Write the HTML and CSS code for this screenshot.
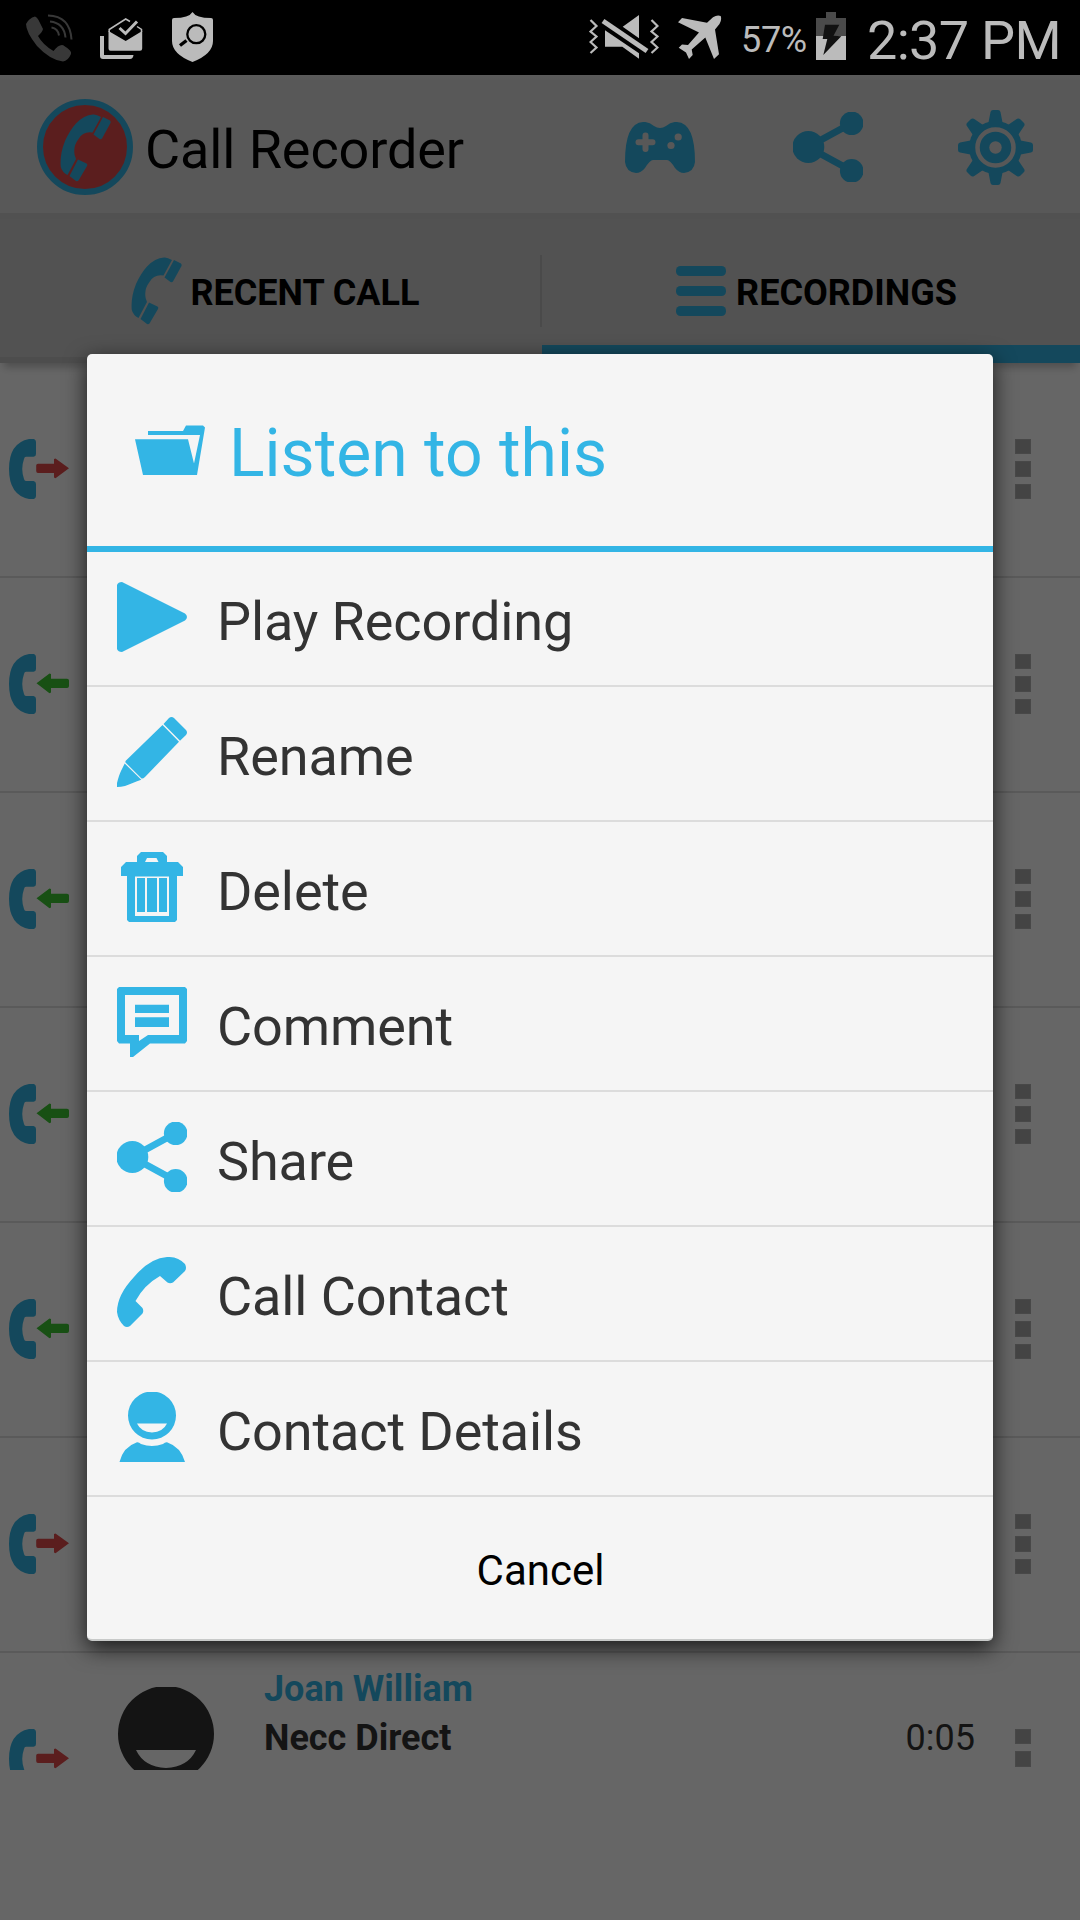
FILE: index.html
```html
<!DOCTYPE html>
<html lang="en">
<head>
    <meta charset="UTF-8">
    <meta name="viewport" content="width=device-width, initial-scale=1.0">
    <title>Call Recorder</title>
    <link rel="stylesheet" href="styles.css">
</head>
<body>
    <!-- Shared icons -->
    <svg class="defs" width="0" height="0">
        <symbol id="handset" viewBox="0 0 51 68">
            <path d="M33 .5Q36 0 41 3L32.500 18.500Q23 17 18.500 25Q14 31 14.300 37Q14 41 16 45L7.500 61Q2 58 .8 53Q-.5 41 5 27Q10 16 16 9.500Q24 1 33 .5Z"/>
            <path d="M43 3L50 6.500Q51 7.500 50.500 9L42 24.500Q41 25.500 39.500 25L33.500 20.500Z"/>
            <path d="M18 45.500L26.500 49.500Q28 50.500 27 52L18.500 66.500Q17.500 67.500 16 67L9.500 62Z"/>
        </symbol>
        <symbol id="share" viewBox="0 0 70 70">
            <path d="M15 35L59 11M15 35L59 59" stroke="currentColor" stroke-width="7"/>
            <circle cx="15.300" cy="35" r="16"/>
            <circle cx="58.700" cy="11.300" r="11.800"/>
            <circle cx="58.700" cy="58.900" r="11.800"/>
        </symbol>
        <symbol id="contact" viewBox="0 0 70 70">
            <path fill-rule="evenodd" d="M35-.5A24 24 0 0 1 35 47.500A24 24 0 0 1 35-.5ZM20 31.500Q24 40 35 40.500Q46 40 50 31.500Z"/>
            <path d="M2.500 70Q6 55 20 50.200Q22 50 24 52Q35 56 46 52Q48 50 50 50.200Q64 55 68 70Z"/>
        </symbol>
        <symbol id="receiver" viewBox="0 0 27 60">
            <path d="M20 0H25Q27 1 27 3V15Q27 17.500 24.500 17.700H17Q15.500 17.700 15 20Q11.500 30 15 40Q15.500 42 17 42H24.500Q27 42.300 27 45V57Q27 59 25 60H20Q0 56 0 30Q0 4 20 0Z"/>
        </symbol>
        <symbol id="outgoing" viewBox="0 0 60 60">
            <use href="#receiver" width="27" height="60" fill="#33b5e5"/>
            <path fill="#e34d4d" d="M29 24.700H45V20L46.500 19.500L60 29.300L46.500 39.300L45 38.500V34H29Q27.200 34 27.200 32V26.500Q27.200 24.700 29 24.700Z"/>
        </symbol>
        <symbol id="incoming" viewBox="0 0 60 60">
            <use href="#receiver" width="27" height="60" fill="#33b5e5"/>
            <path fill="#3cc832" d="M58 24.700H42V20L40.500 19.500L27.500 29.300L40.500 39.300L42 38.500V34H58Q60 34 60 32V26.500Q60 24.700 58 24.700Z"/>
        </symbol>
    </svg>

    <div class="status-bar">
        <div class="status-left">
            <svg class="status-call" width="47" height="48" viewBox="0 0 47 48">
                <path fill="#383838" d="M0 10Q3 4 9 2.500Q11 3 12.500 6L17 15Q16.500 18 12 22Q17 31 27.500 37Q32 31 36 31Q38 31 44 36.500Q45.500 38 45 40Q42 47 37 47.500Q24 46 11 32Q0 18 0 10Z"/>
                <path fill="none" stroke="#383838" stroke-width="2" d="M22 1.500Q44 2 45.500 25.500M24 7.500Q38 9 39.500 23.500M25.500 13.500Q32 14.500 33 21.500"/>
            </svg>
            <svg class="status-mail" width="43" height="42" viewBox="0 0 43 42">
                <path fill="#bbb" d="M0 18H4V37H33.500Q33 41 30 41H3Q0 41 0 38ZM8.500 13L25.700 23L42.200 13V30.500Q42.200 32.700 40 32.700H10.500Q8.500 32.700 8.500 30.500Z"/>
                <path fill="none" stroke="#bbb" stroke-width="1.500" d="M9.200 14V11.500L25.700 1L30 3.500M37 8.500L41.500 11.500V14"/>
                <path fill="none" stroke="#bbb" stroke-width="3" d="M19.500 10L25.500 15.500L37 3.500"/>
            </svg>
            <svg class="status-shield" width="41" height="50" viewBox="0 0 41 50">
                <path fill="#bbb" d="M20.500 0Q24 6 39 6Q41 6 41 8V29Q41 42 20.500 50Q0 42 0 29V8Q0 6 2 6Q17 6 20.500 0Z"/>
                <circle cx="24.300" cy="22.200" r="9" fill="none" stroke="#000" stroke-width="2.300"/>
                <path stroke="#000" stroke-width="3.400" d="M14.500 28.500L8 33.500"/>
            </svg>
        </div>
        <div class="status-right">
            <svg class="status-mute" width="70" height="46" viewBox="0 0 70 46">
                <path fill="none" stroke="#bbb" stroke-width="2.200" d="M1.500 6L7.500 12L1.500 17.500L7.500 22.500L1.500 28L7.500 33.500L1.500 39M62.500 6L68.500 12L62.500 17.500L68.500 22.500L62.500 28L68.500 33.500L62.500 39"/>
                <path fill="#bbb" d="M50 1V24.300L33.700 12.700ZM16 16.300L50 39.300V44.700L33.300 32.700H16Z"/>
                <path stroke="#bbb" stroke-width="5" d="M14 7L58 37"/>
            </svg>
            <svg class="status-plane" width="44" height="44" viewBox="0 0 44 44">
                <path fill="#bbb" d="M0 7.300L4 3L29 7.700L35 2.300Q39-.3 42.700 1Q44 5 41.500 9L37 14.500L41 39.300L36 44L27.300 22.500L13.700 34.500L14.700 40L11 44L8 37.500L.7 32.700L4 29.500L10 30L21 17.500Z"/>
            </svg>
            <span class="battery-level">57%</span>
            <svg class="status-battery" width="30" height="48" viewBox="0 0 30 48">
                <path fill="#4a4a4a" d="M10 0H20V6H30V24H0V6H10Z"/>
                <path fill="#bbb" d="M0 24H30V48H0Z"/>
                <path fill="#111" d="M9 12.700H23.300L17.500 23.700L25.300 24.300L7.300 43L11.300 27H6.700Z"/>
            </svg>
            <span class="clock">2:37 PM</span>
        </div>
    </div>

    <div class="app">
        <div class="header">
            <svg class="logo" width="96" height="96" viewBox="0 0 96 96">
                <circle cx="48" cy="48" r="45" fill="#e34d4d" stroke="#33b5e5" stroke-width="6"/>
                <use href="#handset" x="23" y="15" width="51" height="68" fill="#33b5e5"/>
            </svg>
            <h1>Call Recorder</h1>
            <div class="header-actions">
                <svg class="icon" width="70" height="51" viewBox="0 0 70 51">
                    <path d="M18 0Q24-.5 29 4Q35 8 41 4Q46-.5 52 0Q70 1 70 40Q69 50 59 51Q54 51 50 46Q45 38 42 38H28Q25 38 20 46Q16 51 11 51Q1 50 0 40Q0 1 18 0Z"/>
                    <path class="cutout" stroke-width="6" stroke-linecap="round" d="M20.500 13.500V27M13.500 20.300H27.500"/>
                    <circle cx="53.200" cy="15" r="3.600" fill="#dcdcdc"/>
                    <circle cx="46" cy="23.500" r="3.600" fill="#dcdcdc"/>
                </svg>
                <svg class="icon" width="70" height="70"><use href="#share"/></svg>
                <svg class="icon gear" width="75" height="75" viewBox="0 0 75 75">
                    <circle cx="37.500" cy="37.500" r="26.500"/>
                    <g id="teeth">
                        <path id="tooth" d="M30 15L32.500 2Q33 0 35 0H40Q42 0 42.500 2L45 15ZM30 60L32.500 73Q33 75 35 75H40Q42 75 42.500 73L45 60Z"/>
                        <use href="#tooth" transform="rotate(90 37.500 37.500)"/>
                    </g>
                    <use href="#teeth" transform="rotate(45 37.500 37.500)"/>
                    <circle class="cutout" cx="37.500" cy="37.500" r="18" stroke-width="4.500"/>
                    <circle cx="37.500" cy="37.500" r="6.200" fill="#dcdcdc"/>
                </svg>
            </div>
        </div>

        <div class="tabs">
            <div class="tab">
                <svg class="icon" width="51" height="68"><use href="#handset"/></svg>
                <span>RECENT CALL</span>
            </div>
            <div class="tab active">
                <svg class="icon list-icon" width="50" height="50" viewBox="0 0 50 50">
                    <rect width="50" height="10" rx="4.500"/>
                    <rect y="20" width="50" height="10" rx="4.500"/>
                    <rect y="40" width="50" height="10" rx="4.500"/>
                </svg>
                <span>RECORDINGS</span>
            </div>
        </div>

        <div class="list">
            <div class="row">
                <svg width="60" height="60"><use href="#outgoing"/></svg>
                <div class="more"><i></i><i></i><i></i></div>
            </div>
            <div class="row">
                <svg width="60" height="60"><use href="#incoming"/></svg>
                <div class="more"><i></i><i></i><i></i></div>
            </div>
            <div class="row">
                <svg width="60" height="60"><use href="#incoming"/></svg>
                <div class="more"><i></i><i></i><i></i></div>
            </div>
            <div class="row">
                <svg width="60" height="60"><use href="#incoming"/></svg>
                <div class="more"><i></i><i></i><i></i></div>
            </div>
            <div class="row">
                <svg width="60" height="60"><use href="#incoming"/></svg>
                <div class="more"><i></i><i></i><i></i></div>
            </div>
            <div class="row">
                <svg width="60" height="60"><use href="#outgoing"/></svg>
                <div class="more"><i></i><i></i><i></i></div>
            </div>
            <div class="row">
                <svg width="60" height="60"><use href="#outgoing"/></svg>
                <svg class="avatar" width="140" height="140"><use href="#contact"/></svg>
                <div class="info">
                    <div class="name">Joan William</div>
                    <div>Necc Direct</div>
                </div>
                <span class="duration">0:05</span>
                <div class="more"><i></i><i></i><i></i></div>
            </div>
        </div>

        <div class="overlay">
            <div class="dialog">
                <div class="dialog-title">
                    <svg class="icon" width="70" height="50" viewBox="0 0 70 50">
                        <path d="M0 14.300H53L59 38.500L65 10H13V6H48L51 .5H68L70 2.500L62 50H8Z"/>
                    </svg>
                    <h2>Listen to this</h2>
                </div>
                <div class="menu-item">
                    <svg class="icon" width="70" height="70" viewBox="0 0 70 70">
                        <path d="M0 3Q1 0 5 0L68 31.500Q72 35 68 38.500L5 70Q1 70 0 67Z"/>
                    </svg>
                    <span>Play Recording</span>
                </div>
                <div class="menu-item">
                    <svg class="icon" width="70" height="70" viewBox="0 0 70 70">
                        <path d="M46.500 7L52 1Q54.500-1 57 1L69 13Q71 15.500 69 18L63 23.700ZM45.500 8L62 24.800L28 60Q26 62 24.500 61.500L8.500 45.500Q8 44.500 9 43.500ZM7.700 46.500L24.300 62.800Q14 66.500 8 69Q4 70 0 70V66Q2 58 4 54Z"/>
                    </svg>
                    <span>Rename</span>
                </div>
                <div class="menu-item">
                    <svg class="icon" width="70" height="70" viewBox="0 0 70 70">
                        <path fill-rule="evenodd" d="M24 0H46L50 4V10H61L66 15V24H60V68L58 70H12L10 68V24H4V15L9 10H20V4ZM28 10H41.500L39.500 6H30ZM18 24.500V64H52V24.500Z"/>
                        <path d="M20 26H28V60H20ZM30 26H40V60H30ZM42 26H50V60H42Z"/>
                    </svg>
                    <span>Delete</span>
                </div>
                <div class="menu-item">
                    <svg class="icon" width="70" height="70" viewBox="0 0 70 70">
                        <path fill-rule="evenodd" d="M2 0H68L70 2V54L68 56.500H33L16 70H13V56.500H2L0 54V2ZM8 8V48H22V54L31 48H62V8Z"/>
                        <path d="M18 17.700H52V26H18ZM18 30.300H52V40H18Z"/>
                    </svg>
                    <span>Comment</span>
                </div>
                <div class="menu-item">
                    <svg class="icon" width="70" height="70"><use href="#share"/></svg>
                    <span>Share</span>
                </div>
                <div class="menu-item">
                    <svg class="icon" width="70" height="70" viewBox="0 0 70 70">
                        <path d="M50 0Q61-.5 68 7Q70 11 68 14L56 25.500Q53 27 50.500 25.500L43 19Q27 28 18.500 44L25.500 51Q27 54 25.500 56.500L13 69Q10 71 7 69Q1 63 0 55Q0 38 17 20Q33 1 50 0Z"/>
                    </svg>
                    <span>Call Contact</span>
                </div>
                <div class="menu-item">
                    <svg class="icon" width="70" height="70"><use href="#contact"/></svg>
                    <span>Contact Details</span>
                </div>
                <div class="cancel">Cancel</div>
            </div>
        </div>
    </div>
</body>
</html>
```

FILE: styles.css
```css
* {
    box-sizing: border-box;
}

body {
    font-family: Roboto, "Liberation Sans", sans-serif;
    background: #000;
    margin: 0;
    width: 1080px;
    height: 1920px;
    overflow: hidden;
}

svg {
    display: block;
    flex-shrink: 0;
}

.defs {
    position: absolute;
}

.icon {
    color: #33b5e5;
    fill: #33b5e5;
}

.cutout {
    fill: none;
    stroke: #dcdcdc;
}

/* status bar */
.status-bar {
    display: flex;
    justify-content: space-between;
    height: 75px;
    padding: 0 22px 0 26px;
    color: #bbb;
}

.status-left,
.status-right {
    display: flex;
    align-items: flex-start;
}

.status-call {
    margin-top: 14px;
}

.status-mail {
    margin: 18px 29px 0 27px;
}

.status-shield {
    margin-top: 12px;
}

.status-mute {
    margin: 14px 19px 0 0;
}

.status-plane {
    margin: 15px 19px 0 0;
}

.battery-level {
    width: 75px;
    font-size: 36px;
    line-height: 42px;
    margin-top: 19px;
    letter-spacing: -0.3px;
}

.status-battery {
    margin: 12px 21px 0 0;
}

.clock {
    width: 191px;
    font-size: 54px;
    line-height: 64px;
    margin-top: 9px;
    letter-spacing: -0.7px;
    white-space: nowrap;
}

/* app */
.app {
    position: relative;
    height: 1845px;
    background: #fff;
}

.header {
    display: flex;
    align-items: center;
    height: 138px;
    padding: 6px 47px 0 37px;
    background: linear-gradient(#e4e4e4, #dcdcdc 6px);
}

.header h1 {
    margin: 4px 0 0 12px;
    font-size: 54px;
    font-weight: 400;
    letter-spacing: -0.1px;
    color: #000;
}

.header-actions {
    display: flex;
    align-items: center;
    gap: 98px;
    margin-left: auto;
}

.gear {
    margin-left: -3px;
}

.tabs {
    display: flex;
    height: 150px;
    background: #cdcdcd;
    border-top: 6px solid #cacaca;
    box-shadow: 0 8px 8px -4px rgba(0, 0, 0, 0.25);
}

.tab {
    flex: 1;
    display: flex;
    align-items: center;
    justify-content: center;
    padding-top: 6px;
    border-bottom: 6px solid #c0c0c0;
    font-size: 36px;
    font-weight: 700;
    color: #000;
}

.tab span {
    margin-top: 4px;
}

.tab:first-child {
    flex: 0 0 542px;
    padding-left: 9px;
    gap: 8px;
    background: linear-gradient(#b9b9b9, #b9b9b9) 540px 36px / 2px 72px no-repeat;
}

.tab.active {
    padding: 18px 0 0 11px;
    gap: 10px;
    border-bottom: 18px solid #33b5e5;
}

.list {
    height: 1407px;
    overflow: hidden;
}

.row {
    display: flex;
    align-items: center;
    height: 215px;
    padding: 0 49px 1px 9px;
    border-bottom: 2px solid #e1e1e1;
    font-size: 36px;
    color: #333;
}

.more {
    display: flex;
    flex-direction: column;
    gap: 7px;
    margin-left: auto;
}

.more i {
    width: 16px;
    height: 15.500px;
    background: #aaa;
    border: 1px solid #b4b4b4;
}

.avatar {
    align-self: flex-start;
    margin: 34px 0 0 27px;
    fill: #333;
}

.info {
    align-self: flex-start;
    margin: 12px 0 0 28px;
    font-weight: 700;
    line-height: 49px;
}

.info .name {
    color: #33b5e5;
}

.duration {
    align-self: flex-start;
    margin: 61px 0 0 auto;
    line-height: 49px;
}

.duration + .more {
    margin-left: 40px;
}

/* dialog */
.overlay {
    position: absolute;
    inset: 0;
    display: flex;
    align-items: center;
    justify-content: center;
    background: rgba(0, 0, 0, 0.6);
}

.dialog {
    width: 906px;
    height: 1287px;
    background: #f5f5f5;
    border-radius: 5px;
    border-bottom: 2px solid #c8cac9;
    box-shadow: 0 7px 22px rgba(0, 0, 0, 0.75);
}

.dialog-title {
    display: flex;
    align-items: center;
    height: 198px;
    padding: 0 48px;
    border-bottom: 6px solid #33b5e5;
}

.dialog-title h2 {
    margin: 7px 0 0 24px;
    font-size: 66px;
    font-weight: 400;
    color: #33b5e5;
}

.menu-item {
    display: flex;
    align-items: center;
    height: 135px;
    padding: 0 30px 3px;
    border-bottom: 2px solid #dcdcdc;
    font-size: 54px;
    color: #333;
}

.menu-item span {
    margin: 9px 0 0 30px;
    letter-spacing: -0.1px;
}

.cancel {
    height: 142px;
    padding: 3px 0 0 1px;
    font-size: 42px;
    line-height: 142px;
    text-align: center;
    color: #000;
}
```
